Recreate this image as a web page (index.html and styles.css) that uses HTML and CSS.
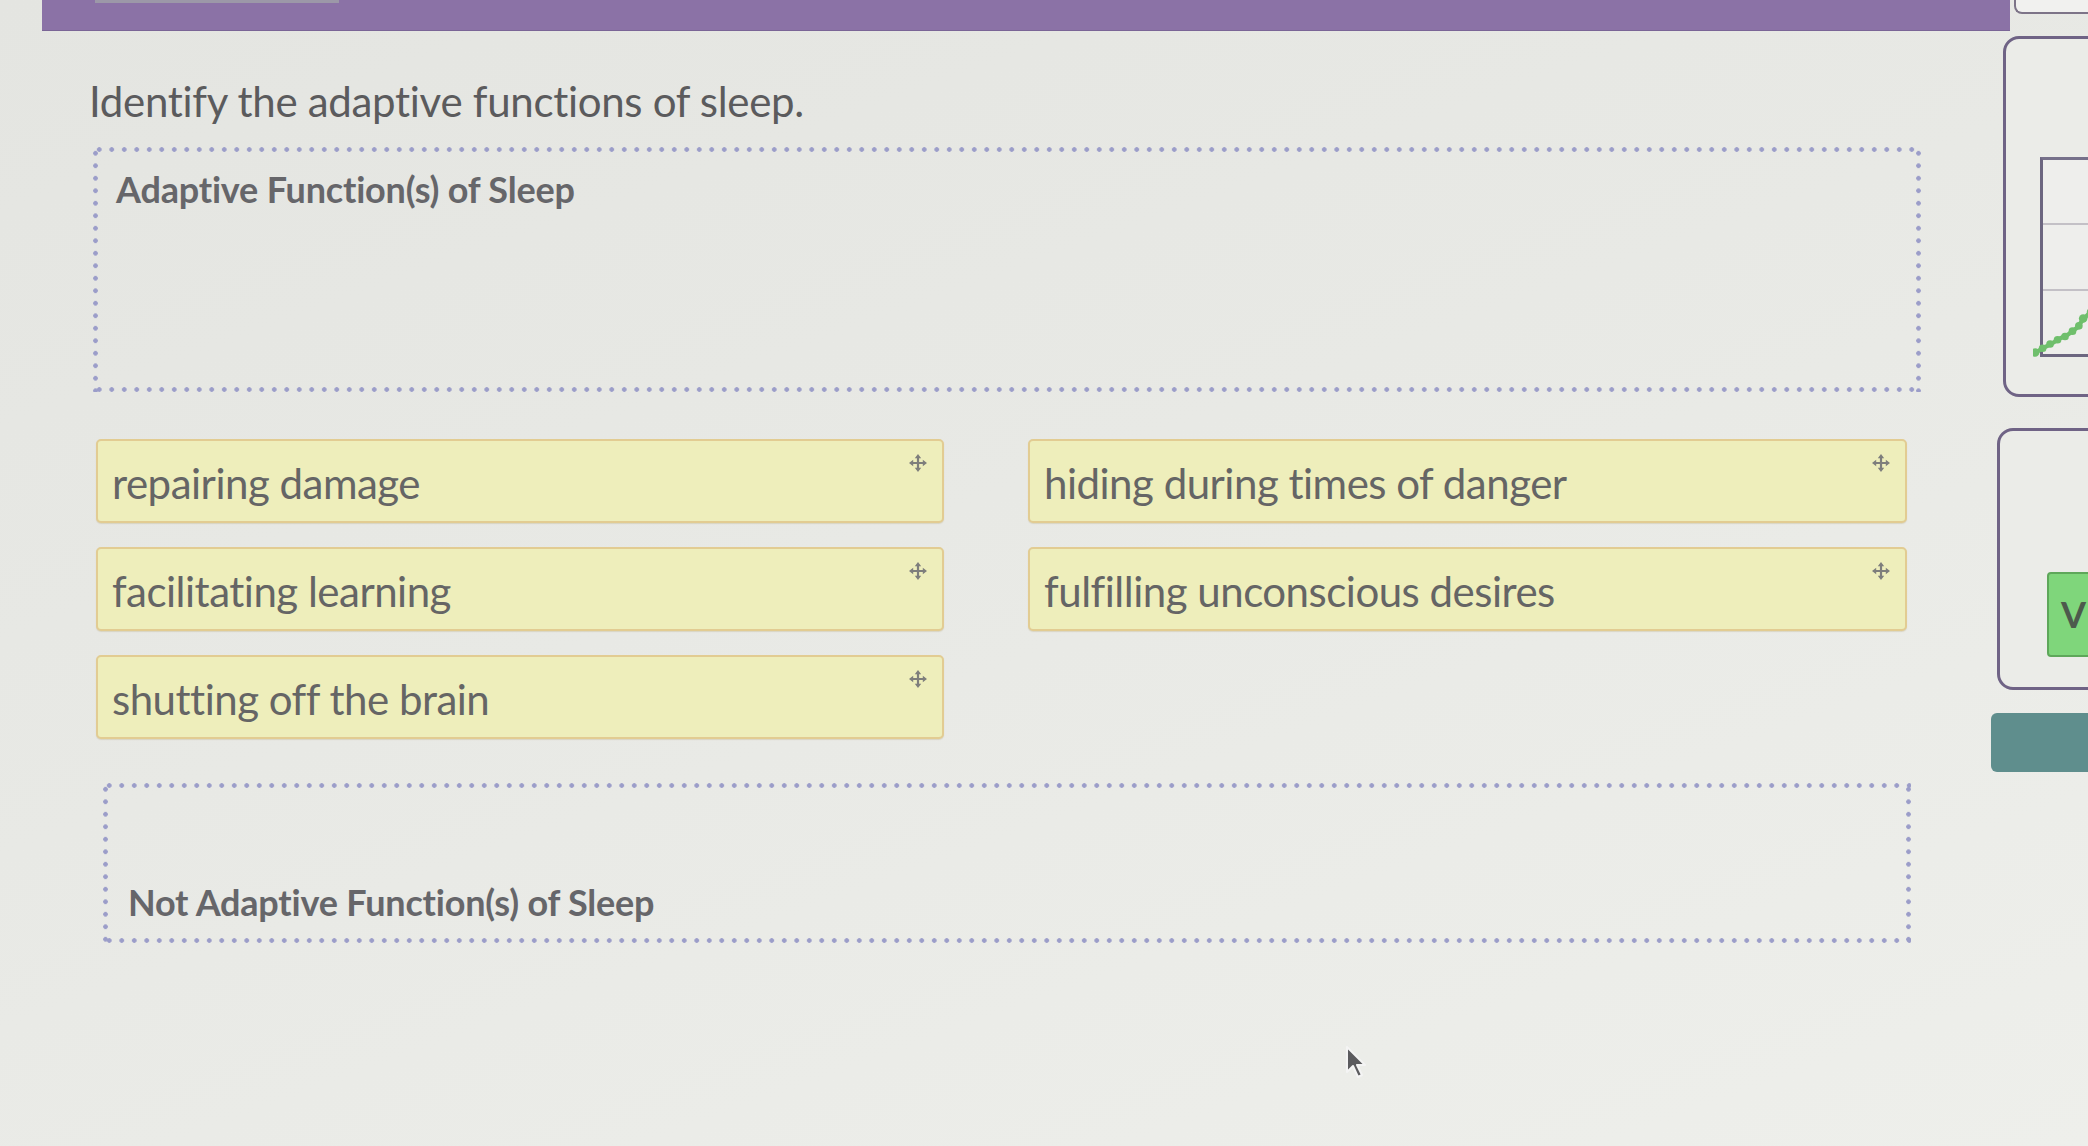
FILE: index.html
```html
<!DOCTYPE html>
<html lang="en">
<head>
<meta charset="utf-8">
<title>Identify the adaptive functions of sleep</title>
<link rel="stylesheet" href="styles.css">
</head>
<body>
<div class="topbar-row">
  <div class="topbar"><div class="topbar-tab"></div></div>
  <div class="topbar-right"></div>
</div>
<div class="content">
  <main class="main">
    <h1 class="title">Identify the adaptive functions of sleep.</h1>
    <section class="zone zone-top">
      <div class="zone-label">Adaptive Function(s) of Sleep</div>
    </section>
    <div class="chips">
      <div class="col col-left">
        <div class="chip"><span>repairing damage</span><svg class="move" viewBox="0 0 18 18"><path d="M9 2v14M2 9h14" stroke="#7e7e7c" stroke-width="2.2"/><path d="M9 0l3.2 4.2H5.8zM9 18l3.2-4.2H5.8zM0 9l4.2-3.2v6.4zM18 9l-4.2-3.2v6.4z" fill="#7e7e7c"/></svg></div>
        <div class="chip"><span>facilitating learning</span><svg class="move" viewBox="0 0 18 18"><path d="M9 2v14M2 9h14" stroke="#7e7e7c" stroke-width="2.2"/><path d="M9 0l3.2 4.2H5.8zM9 18l3.2-4.2H5.8zM0 9l4.2-3.2v6.4zM18 9l-4.2-3.2v6.4z" fill="#7e7e7c"/></svg></div>
        <div class="chip"><span>shutting off the brain</span><svg class="move" viewBox="0 0 18 18"><path d="M9 2v14M2 9h14" stroke="#7e7e7c" stroke-width="2.2"/><path d="M9 0l3.2 4.2H5.8zM9 18l3.2-4.2H5.8zM0 9l4.2-3.2v6.4zM18 9l-4.2-3.2v6.4z" fill="#7e7e7c"/></svg></div>
      </div>
      <div class="col col-right">
        <div class="chip"><span>hiding during times of danger</span><svg class="move" viewBox="0 0 18 18"><path d="M9 2v14M2 9h14" stroke="#7e7e7c" stroke-width="2.2"/><path d="M9 0l3.2 4.2H5.8zM9 18l3.2-4.2H5.8zM0 9l4.2-3.2v6.4zM18 9l-4.2-3.2v6.4z" fill="#7e7e7c"/></svg></div>
        <div class="chip"><span>fulfilling unconscious desires</span><svg class="move" viewBox="0 0 18 18"><path d="M9 2v14M2 9h14" stroke="#7e7e7c" stroke-width="2.2"/><path d="M9 0l3.2 4.2H5.8zM9 18l3.2-4.2H5.8zM0 9l4.2-3.2v6.4zM18 9l-4.2-3.2v6.4z" fill="#7e7e7c"/></svg></div>
      </div>
    </div>
    <section class="zone zone-bottom">
      <div class="zone-label">Not Adaptive Function(s) of Sleep</div>
    </section>
  </main>
  <aside class="side">
    <div class="panel panel-chart">
      <div class="chart">
        <div class="chart-row"></div>
        <div class="chart-row"></div>
        <div class="chart-row"></div>
        <svg class="chart-line" viewBox="0 0 60 60">
          <polyline points="1,54 9,49 17,45 25,40 33,36 41,30 47,22 55,14" fill="none" stroke="#6fbf6c" stroke-width="4"/>
          <g fill="#6fbf6c">
            <circle cx="2" cy="53" r="4"/><circle cx="9" cy="49" r="3.6"/><circle cx="16" cy="45" r="3.6"/><circle cx="23" cy="41" r="3.6"/><circle cx="30" cy="38" r="3.6"/><circle cx="37" cy="33" r="3.6"/><circle cx="43" cy="28" r="3.6"/><circle cx="47" cy="21" r="4"/><circle cx="54" cy="15" r="3.6"/>
          </g>
        </svg>
      </div>
    </div>
    <div class="panel panel-button">
      <div class="green-btn">V</div>
    </div>
    <div class="teal-bar"></div>
  </aside>
</div>
<svg class="cursor" viewBox="0 0 22 34"><path d="M2 2v25l6-6 5 11 4-2-5-10h8z" fill="#5b5b5e" stroke="#f4f4f4" stroke-width="2" stroke-linejoin="round"/></svg>
</body>
</html>
```
FILE: styles.css
```css
html, body {
  margin: 0;
  padding: 0;
}
body {
  width: 2088px;
  height: 1146px;
  overflow: hidden;
  position: relative;
  background: linear-gradient(160deg, #e4e5e1 0%, #e8e9e5 45%, #eeefeb 100%);
  font-family: Lato, "Open Sans", sans-serif;
  color: #616161;
}
.topbar-row {
  display: flex;
  align-items: flex-start;
  height: 31px;
}
.topbar {
  flex-shrink: 0;
  margin-left: 42px;
  width: 1968px;
  height: 31px;
  background: #8b72a6;
  border-bottom: 1px solid #7a6596;
  box-sizing: border-box;
}
.topbar-tab {
  margin-left: 53px;
  width: 244px;
  height: 3px;
  background: #9c98a8;
}
.topbar-right {
  flex-shrink: 0;
  margin-left: 4px;
  width: 120px;
  height: 12px;
  background: #f1f1ef;
  border: 2px solid #7d7488;
  border-top: none;
  border-right: none;
  border-bottom-left-radius: 8px;
}
.content {
  display: flex;
}
.main {
  width: 1991px;
  flex-shrink: 0;
  padding: 44px 0 0 0;
  box-sizing: border-box;
}
.title {
  margin: 0 0 20px 89px;
  font-size: 42px;
  line-height: 52px;
  font-weight: 400;
  color: #5b5b5d;
  letter-spacing: -0.3px;
}
.zone {
  box-sizing: border-box;
  --dot: radial-gradient(circle, #9b9dc9 2px, transparent 2.6px);
  background:
    var(--dot) left top / 12.5px 5px repeat-x,
    var(--dot) left bottom / 12.5px 5px repeat-x,
    var(--dot) left top / 5px 12.5px repeat-y,
    var(--dot) right top / 5px 12.5px repeat-y;
}
.zone-top {
  margin-left: 93px;
  width: 1828px;
  height: 245px;
  padding: 21px 0 0 23px;
}
.zone-label {
  font-size: 36px;
  line-height: 42px;
  font-weight: 700;
  color: #66666a;
  letter-spacing: -0.2px;
}
.chips {
  display: flex;
  gap: 84px;
  margin: 47px 0 0 96px;
}
.col {
  display: flex;
  flex-direction: column;
  gap: 24px;
}
.col-left { width: 848px; }
.col-right { width: 879px; }
.chip {
  position: relative;
  height: 84px;
  box-sizing: border-box;
  display: flex;
  align-items: center;
  padding: 0 0 0 14px;
  background: #eeeebb;
  border: 2px solid #e2cc92;
  border-radius: 5px;
  box-shadow: 0 1px 1px rgba(170, 150, 90, 0.25);
  font-size: 42px;
  line-height: 50px;
  color: #656565;
  letter-spacing: -0.5px;
}
.chip span { padding-top: 4px; }
.move {
  position: absolute;
  top: 13px;
  right: 15px;
  width: 18px;
  height: 18px;
}
.zone-bottom {
  margin: 44px 0 0 103px;
  width: 1808px;
  height: 160px;
  display: flex;
  flex-direction: column;
  justify-content: flex-end;
  padding: 0 0 20px 25px;
}
.side {
  flex: 1;
  overflow: hidden;
  display: flex;
  flex-direction: column;
}
.panel {
  box-sizing: border-box;
  width: 220px;
  border: 3px solid #6f6385;
  border-radius: 16px;
  background: #ebece8;
}
.panel-chart {
  margin: 5px 0 0 12px;
  height: 361px;
  padding: 118px 0 0 34px;
}
.chart {
  position: relative;
  width: 200px;
  height: 200px;
  box-sizing: border-box;
  border-left: 3px solid #6c6680;
  border-top: 3px solid #76718a;
  border-bottom: 3px solid #6c6680;
  display: flex;
  flex-direction: column;
  background: #eeeeec;
}
.chart-row {
  flex: 1;
  border-bottom: 2px solid #c3c0c6;
}
.chart-row:last-of-type { border-bottom: none; }
.chart-line {
  position: absolute;
  left: -10px;
  bottom: -6px;
  width: 64px;
  height: 64px;
}
.panel-button {
  margin: 31px 0 0 6px;
  height: 262px;
  padding: 141px 0 0 47px;
}
.green-btn {
  width: 150px;
  height: 85px;
  box-sizing: border-box;
  background: #7fd67b;
  border: 2px solid #5ea75a;
  border-radius: 4px;
  font-size: 36px;
  line-height: 81px;
  font-weight: 700;
  color: #4d5a4d;
  padding-left: 12px;
}
.teal-bar {
  margin-top: 23px;
  width: 200px;
  height: 59px;
  background: #5f8e8d;
  border-radius: 6px;
}
.cursor {
  position: absolute;
  left: 1345px;
  top: 1045px;
  width: 22px;
  height: 34px;
}
```
